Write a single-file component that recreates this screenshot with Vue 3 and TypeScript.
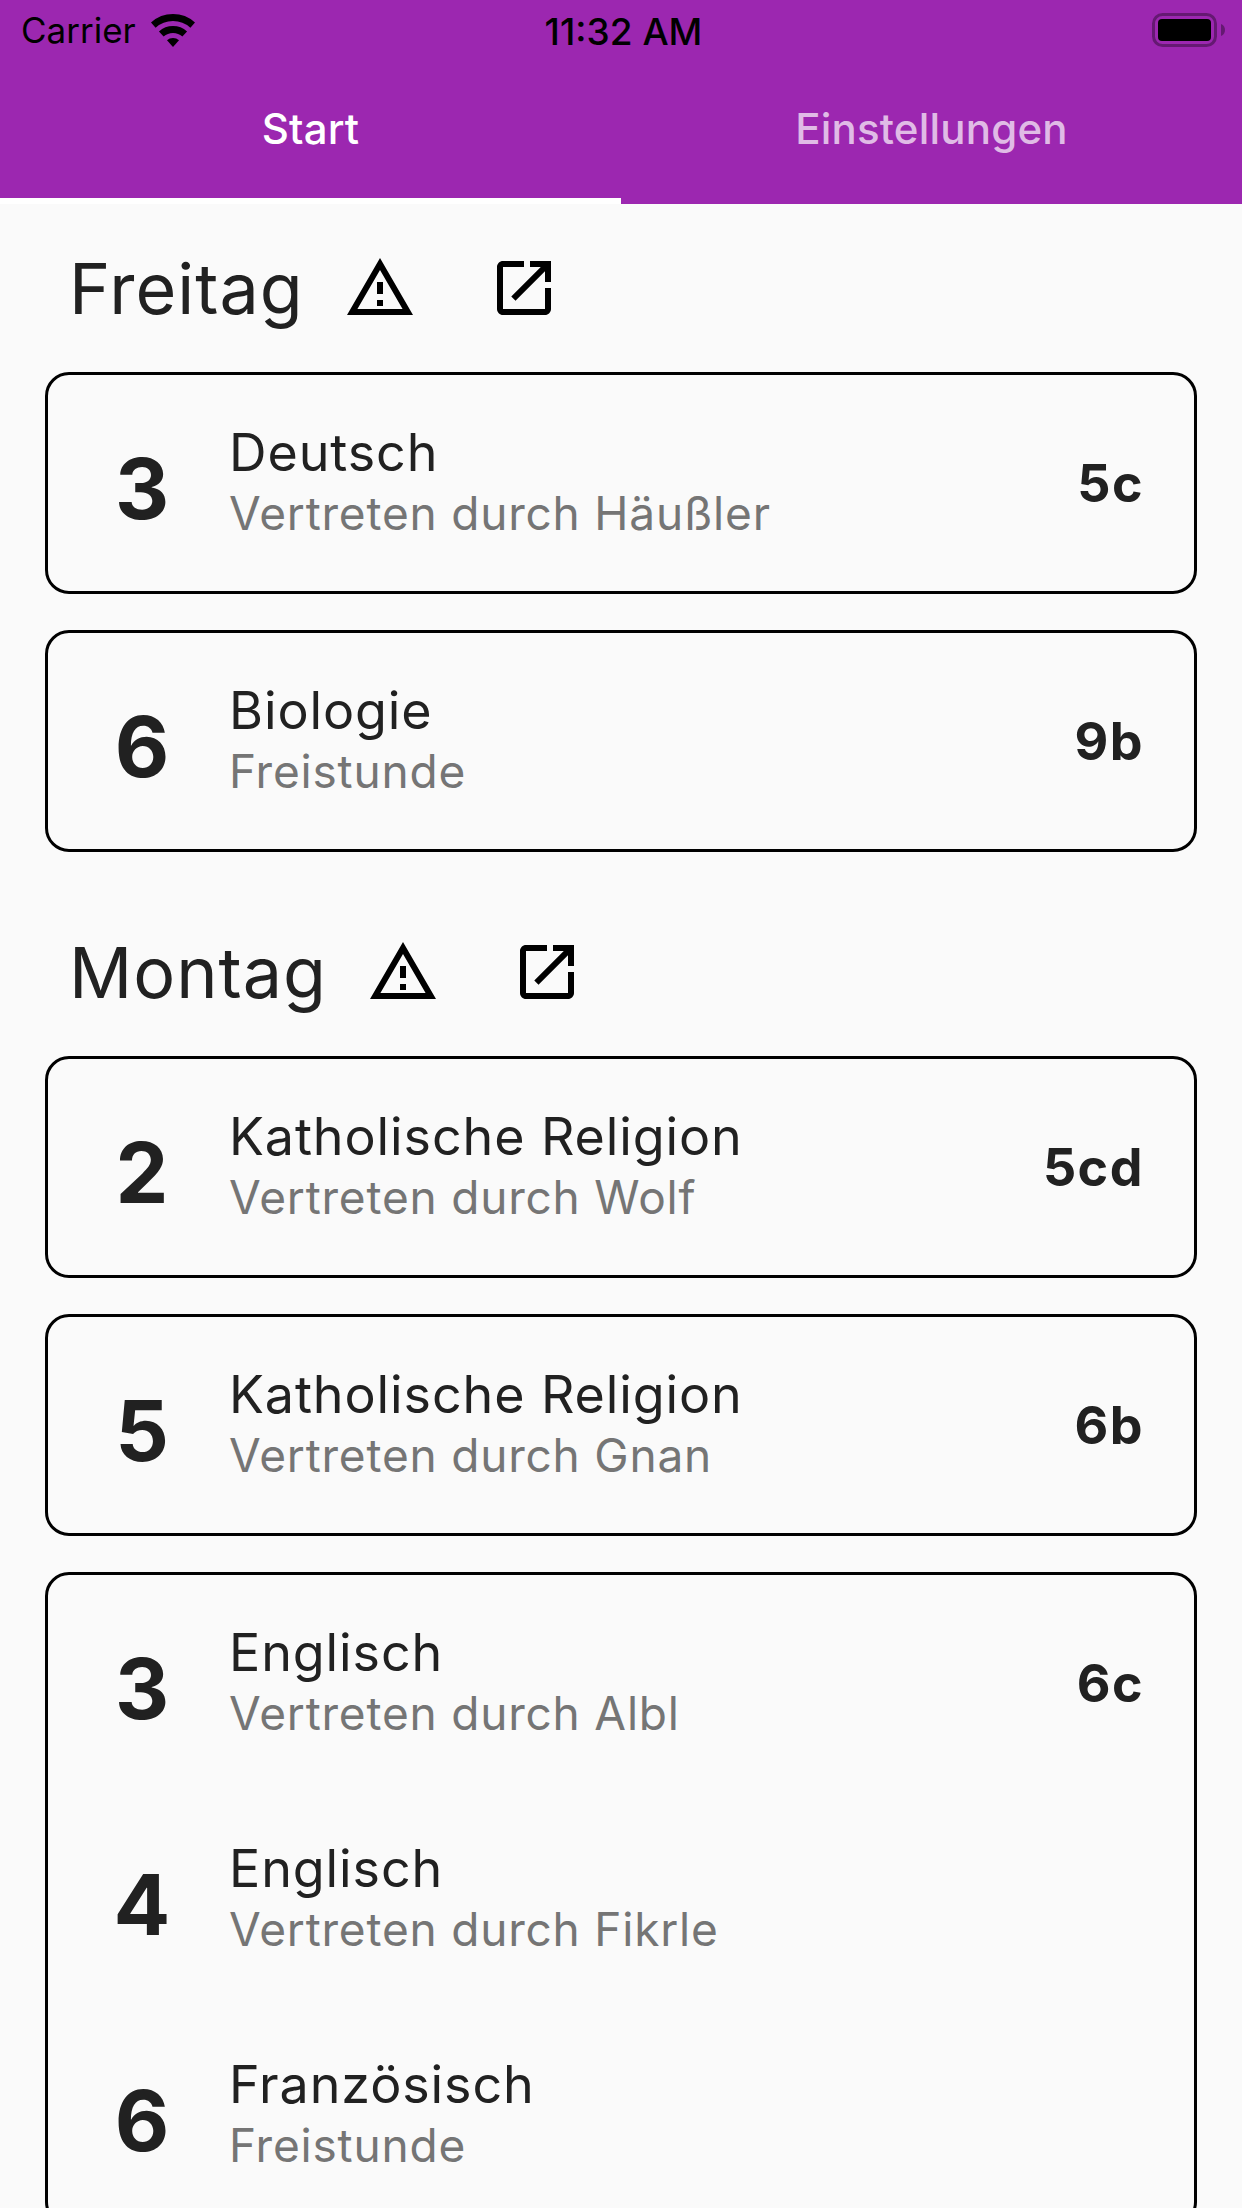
<script setup lang="ts">
interface Lesson {
  hour: number;
  subject: string;
  note: string;
  grade?: string;
}

interface Day {
  name: string;
  cards: Lesson[][];
}

const days: Day[] = [
  {
    name: "Freitag",
    cards: [
      [{ hour: 3, subject: "Deutsch", note: "Vertreten durch Häußler", grade: "5c" }],
      [{ hour: 6, subject: "Biologie", note: "Freistunde", grade: "9b" }],
    ],
  },
  {
    name: "Montag",
    cards: [
      [{ hour: 2, subject: "Katholische Religion", note: "Vertreten durch Wolf", grade: "5cd" }],
      [{ hour: 5, subject: "Katholische Religion", note: "Vertreten durch Gnan", grade: "6b" }],
      [
        { hour: 3, subject: "Englisch", note: "Vertreten durch Albl", grade: "6c" },
        { hour: 4, subject: "Englisch", note: "Vertreten durch Fikrle" },
        { hour: 6, subject: "Französisch", note: "Freistunde" },
      ],
    ],
  },
];
</script>

<template>
  <div class="screen">
    <header class="appbar">
      <div class="status">
        <div class="status-left">
          <span class="carrier">Carrier</span>
          <svg class="wifi" viewBox="0 0 44 33" width="44" height="33">
            <path d="M2.26 11.08A29.5 29.5 0 0 1 41.74 11.08" fill="none" stroke="#000" stroke-width="7" />
            <path d="M10.29 20A17.5 17.5 0 0 1 33.71 20" fill="none" stroke="#000" stroke-width="7" />
            <path d="M22 33L15.98 26.31A9 9 0 0 1 28.02 26.31Z" />
          </svg>
        </div>
        <span class="time">11:32 AM</span>
        <svg class="battery" viewBox="0 0 74 34" width="74" height="34">
          <rect x="1.5" y="1.5" width="62" height="31" rx="9" fill="none" stroke="#000" stroke-opacity="0.35" stroke-width="3" />
          <rect x="6" y="6" width="53" height="22" rx="4" />
          <path d="M69 11C72 12 73 14.500 73 17C73 19.500 72 22 69 23Z" fill-opacity="0.35" />
        </svg>
      </div>
      <nav class="tabs">
        <div class="tab active">Start</div>
        <div class="tab">Einstellungen</div>
      </nav>
    </header>

    <main class="content">
      <section v-for="day in days" :key="day.name" class="day">
        <div class="day-head">
          <h2>{{ day.name }}</h2>
          <svg class="icon" viewBox="0 0 24 24" width="72" height="72">
            <path d="M12 5.99L19.53 19H4.47L12 5.99M12 2L1 21h22L12 2zm1 14h-2v2h2v-2zm0-6h-2v4h2v-4z" />
          </svg>
          <svg class="icon" viewBox="0 0 24 24" width="72" height="72">
            <path d="M19 19H5V5h7V3H5c-1.11 0-2 .9-2 2v14c0 1.1.89 2 2 2h14c1.100 0 2-.9 2-2v-7h-2v7zM14 3v2h3.590l-9.830 9.830 1.410 1.410L19 6.410V10h2V3h-7z" />
          </svg>
        </div>
        <div v-for="(card, i) in day.cards" :key="i" class="card">
          <div v-for="lesson in card" :key="lesson.hour" class="row">
            <span class="hour">{{ lesson.hour }}</span>
            <div class="text">
              <div class="subject">{{ lesson.subject }}</div>
              <div class="note">{{ lesson.note }}</div>
            </div>
            <span v-if="lesson.grade" class="grade">{{ lesson.grade }}</span>
          </div>
        </div>
      </section>
    </main>
  </div>
</template>

<style>
html,
body {
  margin: 0;
  background: #fafafa;
}
</style>

<style scoped>
.screen {
  width: 1242px;
  height: 2208px;
  overflow: hidden;
  background: #fafafa;
  font-family: Inter, "Noto Sans", sans-serif;
  color: #212121;
}

.appbar {
  background: #9c27b0;
  height: 204px;
}

.status {
  height: 60px;
  display: grid;
  grid-template-columns: 1fr auto 1fr;
  align-items: center;
  padding: 0 16px 0 21px;
  color: #000;
  font-size: 35px;
}

.status-left {
  display: flex;
  align-items: center;
  gap: 15px;
}

.time {
  font-size: 37px;
  font-weight: 500;
  padding-top: 2px;
}

.battery {
  justify-self: end;
}

.tabs {
  display: flex;
  height: 144px;
}

.tab {
  flex: 1;
  height: 138px;
  line-height: 138px;
  text-align: center;
  font-size: 42px;
  font-weight: 500;
  letter-spacing: 0.2px;
  color: rgba(255, 255, 255, 0.7);
}

.tab.active {
  height: 144px;
  box-sizing: border-box;
  border-bottom: 6px solid #fff;
  color: #fff;
}

.content {
  padding: 48px 45px 0;
}

.day {
  margin-bottom: 84px;
}

.day-head {
  display: flex;
  align-items: center;
  height: 72px;
  margin-bottom: 48px;
  padding-left: 24px;
}

.day-head h2 {
  margin: 0 40px 0 0;
  font-size: 70px;
  font-weight: 400;
  letter-spacing: 1px;
}

.day-head .icon + .icon {
  margin-left: 72px;
}

.card {
  border: 3px solid #000;
  border-radius: 24px;
  margin-bottom: 36px;
}

.card:last-child {
  margin-bottom: 0;
}

.row {
  display: flex;
  align-items: center;
  height: 216px;
  padding: 0 50px 0 44px;
}

.hour {
  width: 100px;
  margin-right: 37px;
  padding-top: 12px;
  text-align: center;
  font-size: 84px;
  font-weight: 700;
  line-height: 1;
}

.text {
  flex: 1;
}

.subject {
  font-size: 52px;
  line-height: 60px;
  letter-spacing: 0.9px;
}

.note {
  font-size: 46px;
  line-height: 60px;
  letter-spacing: 0.8px;
  color: #757575;
}

.grade {
  font-size: 52px;
  font-weight: 700;
  letter-spacing: 1.500px;
}
</style>
